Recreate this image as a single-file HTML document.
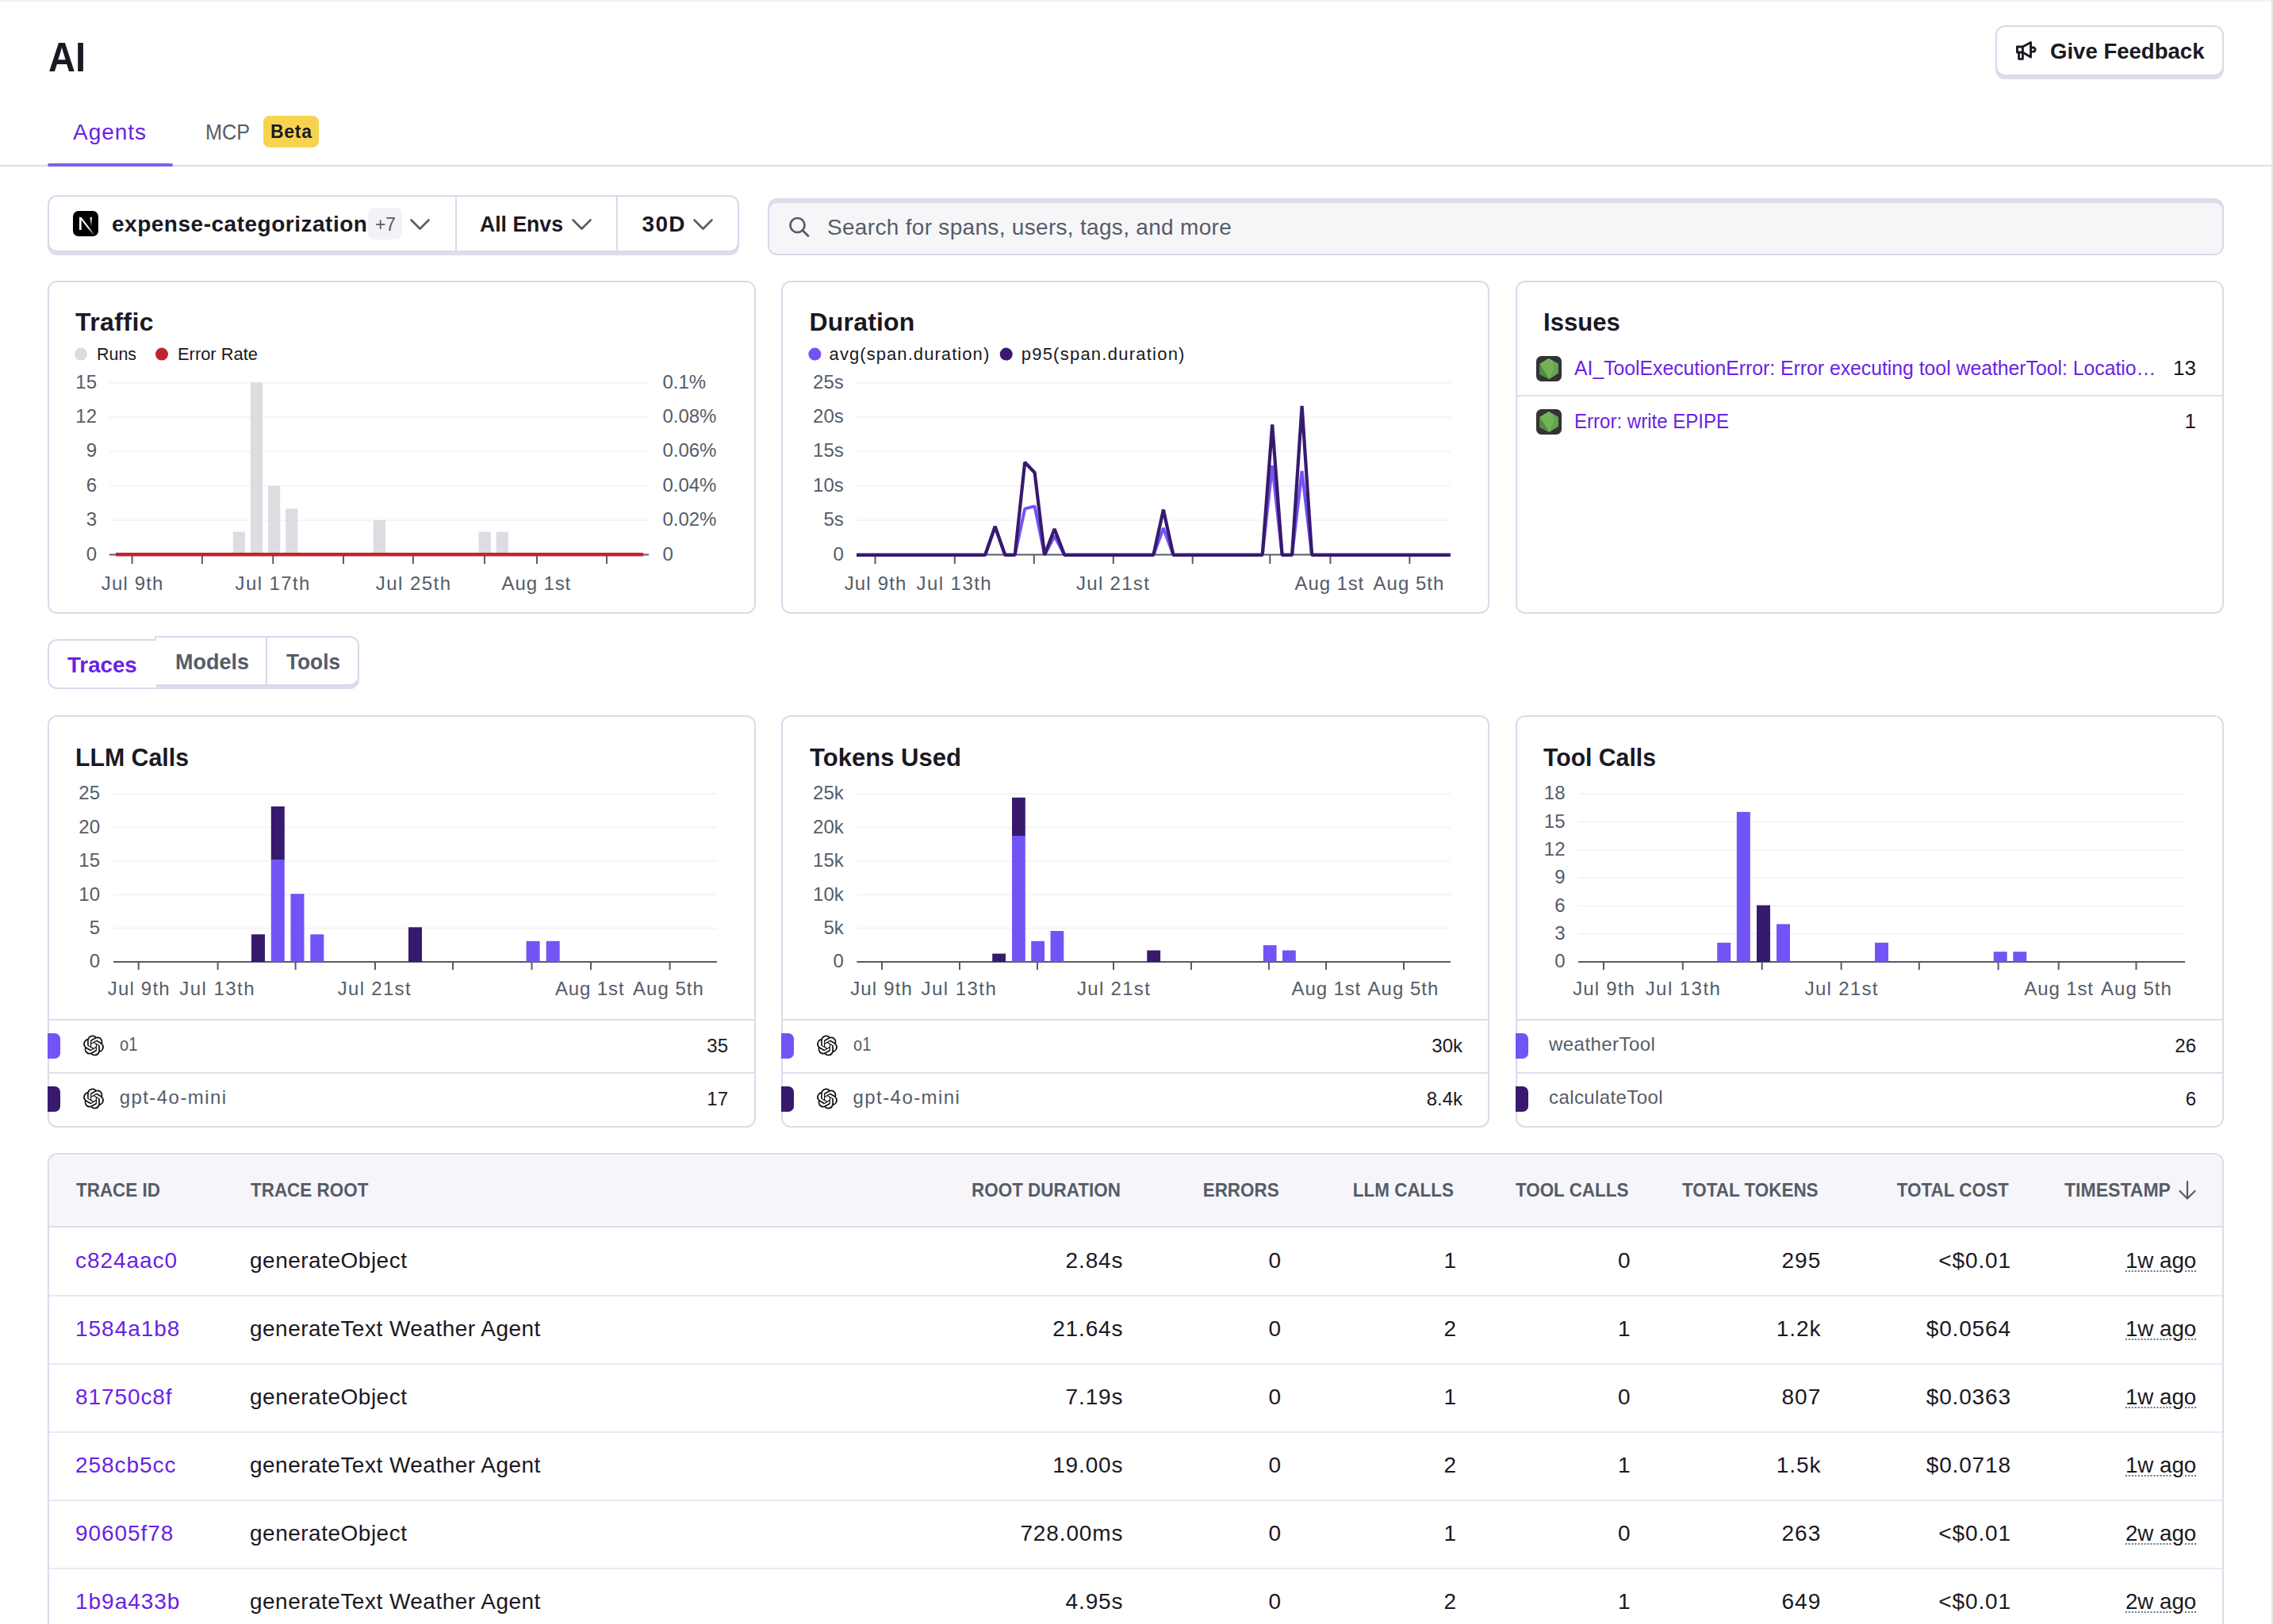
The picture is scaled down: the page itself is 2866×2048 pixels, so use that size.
<!DOCTYPE html><html><head><meta charset="utf-8"><style>
html,body{margin:0;padding:0;}
body{width:2866px;height:2048px;overflow:hidden;position:relative;background:#fff;font-family:"Liberation Sans",sans-serif;}
.a{position:absolute;box-sizing:border-box;}
.t{position:absolute;white-space:nowrap;}
svg{position:absolute;left:0;top:0;}
</style></head><body>

<div class="a" style="left:0px;top:0px;width:2866px;height:2px;background:#f1f1f1;"></div>
<div class="a" style="left:2864px;top:0px;width:2px;height:2048px;background:#e6e6e6;"></div>
<div class="t" style="top:46.0px;font-size:52px;line-height:52px;color:#1b1823;font-weight:700;left:60.5px;transform:scaleX(0.904);transform-origin:0 0;">AI</div>
<div class="a" style="left:2516px;top:32px;width:288px;height:64px;border:2px solid #dcd8ea;border-radius:12px;background:#fff;box-shadow:0 4px 0 #dedbec;"></div>
<svg width="2866" height="2048" style="pointer-events:none">
<g fill="none" stroke="#1b1823" stroke-width="2.8" stroke-linejoin="round" stroke-linecap="round">
<path d="M2543.4 59 h7 v7 h-7 z"/>
<path d="M2550.4 59 L2560.6 53.4 V72 L2550.4 66"/>
<path d="M2545.6 66 v8.4 h4.8 v-8.4"/>
<path d="M2560.6 60 h3 a2.6 2.6 0 0 1 2.6 2.6 a2.6 2.6 0 0 1 -2.6 2.6 h-3"/>
</g></svg>
<div class="t" style="top:51.1px;font-size:28px;line-height:28px;color:#1b1823;font-weight:700;left:2585.0px;transform:scaleX(0.984);transform-origin:0 0;">Give Feedback</div>
<div class="t" style="top:153.1px;font-size:28px;line-height:28px;color:#6a1fe6;letter-spacing:0.96px;left:92.0px;">Agents</div>
<div class="t" style="top:153.1px;font-size:28px;line-height:28px;color:#555c68;left:259.0px;transform:scaleX(0.900);transform-origin:0 0;">MCP</div>
<div class="a" style="left:332px;top:146px;width:70px;height:40px;background:#f7d34d;border-radius:8px;"></div>
<div class="t" style="top:154.5px;font-size:23px;line-height:23px;color:#1b1823;font-weight:700;letter-spacing:0.71px;left:341.0px;">Beta</div>
<div class="a" style="left:0px;top:208px;width:2864px;height:2px;background:#e0dcea;"></div>
<div class="a" style="left:60px;top:206px;width:158px;height:4px;background:#7a5ff2;border-radius:2px;"></div>
<div class="a" style="left:60px;top:246px;width:872px;height:72px;border:2px solid #dcd8ea;border-radius:12px;background:#fff;box-shadow:0 4px 0 #dedbec;"></div>
<div class="a" style="left:574px;top:247px;width:2px;height:70px;background:#dcd8ea;"></div>
<div class="a" style="left:777px;top:247px;width:2px;height:70px;background:#dcd8ea;"></div>
<svg width="2866" height="2048"><defs>
<linearGradient id="ng1" x1="0" y1="0" x2="1" y2="1"><stop offset="0.55" stop-color="#fff"/><stop offset="1" stop-color="#fff" stop-opacity="0"/></linearGradient>
<linearGradient id="ng2" x1="0" y1="0" x2="0" y2="1"><stop offset="0" stop-color="#fff"/><stop offset="1" stop-color="#fff" stop-opacity="0"/></linearGradient></defs>
<rect x="92" y="266" width="32" height="32" rx="7" fill="#000"/>
<rect x="100" y="274" width="2.6" height="16" fill="#fff"/>
<polygon points="100,274 102.6,274 120,296.5 117.5,296.5" fill="url(#ng1)"/>
<rect x="113.6" y="274" width="2.4" height="11.5" fill="url(#ng2)"/></svg>
<div class="t" style="top:269.1px;font-size:28px;line-height:28px;color:#1b1823;font-weight:700;letter-spacing:0.51px;left:141.0px;">expense-categorization</div>
<div class="a" style="left:464px;top:262px;width:43px;height:40px;background:#f3f3f6;border-radius:8px;"></div>
<div class="t" style="top:270.7px;font-size:24px;line-height:24px;color:#555c68;left:473.0px;transform:scaleX(0.950);transform-origin:0 0;">+7</div>
<svg width="2866" height="2048"><path d="M518.5 277.5 l11 11 l11 -11" fill="none" stroke="#555c68" stroke-width="2.6" stroke-linecap="round" stroke-linejoin="round"/><path d="M722.5 277.5 l11 11 l11 -11" fill="none" stroke="#555c68" stroke-width="2.6" stroke-linecap="round" stroke-linejoin="round"/><path d="M875.5 277.5 l11 11 l11 -11" fill="none" stroke="#555c68" stroke-width="2.6" stroke-linecap="round" stroke-linejoin="round"/></svg>
<div class="t" style="top:269.1px;font-size:28px;line-height:28px;color:#1b1823;font-weight:700;left:605.0px;transform:scaleX(0.950);transform-origin:0 0;">All Envs</div>
<div class="t" style="top:269.1px;font-size:28px;line-height:28px;color:#1b1823;font-weight:700;letter-spacing:1.31px;left:809.5px;">30D</div>
<div class="a" style="left:968px;top:250px;width:1836px;height:72px;border:2px solid #dcd8ea;border-radius:12px;background:#f6f6f9;box-shadow:inset 0 4px 0 #dedbec;"></div>
<svg width="2866" height="2048"><g fill="none" stroke="#555c68" stroke-width="2.7" stroke-linecap="round">
<circle cx="1005.5" cy="284" r="9"/><path d="M1012 290.5 L1019 297.5"/></g></svg>
<div class="t" style="top:273.1px;font-size:28px;line-height:28px;color:#555c68;letter-spacing:0.31px;left:1043.0px;">Search for spans, users, tags, and more</div>
<div class="a" style="left:60px;top:354px;width:893px;height:420px;border:2px solid #dddaeb;border-radius:12px;background:#fff;"></div>
<div class="a" style="left:985px;top:354px;width:893px;height:420px;border:2px solid #dddaeb;border-radius:12px;background:#fff;"></div>
<div class="a" style="left:1911px;top:354px;width:893px;height:420px;border:2px solid #dddaeb;border-radius:12px;background:#fff;"></div>
<div class="t" style="top:390.4px;font-size:32px;line-height:32px;color:#1b1823;font-weight:700;letter-spacing:0.41px;left:95.0px;">Traffic</div>
<div class="t" style="top:436.4px;font-size:22px;line-height:22px;color:#1b1823;left:121.5px;transform:scaleX(0.974);transform-origin:0 0;">Runs</div>
<div class="t" style="top:436.4px;font-size:22px;line-height:22px;color:#1b1823;left:223.5px;transform:scaleX(0.995);transform-origin:0 0;">Error Rate</div>
<div class="t" style="top:469.6px;font-size:24px;line-height:24px;color:#555c68;right:2744.0px;text-align:right;">15</div>
<div class="t" style="top:469.6px;font-size:24px;line-height:24px;color:#555c68;left:835.4px;">0.1%</div>
<div class="t" style="top:513.0px;font-size:24px;line-height:24px;color:#555c68;right:2744.0px;text-align:right;">12</div>
<div class="t" style="top:513.0px;font-size:24px;line-height:24px;color:#555c68;left:835.4px;">0.08%</div>
<div class="t" style="top:556.4px;font-size:24px;line-height:24px;color:#555c68;right:2744.0px;text-align:right;">9</div>
<div class="t" style="top:556.4px;font-size:24px;line-height:24px;color:#555c68;left:835.4px;">0.06%</div>
<div class="t" style="top:599.8px;font-size:24px;line-height:24px;color:#555c68;right:2744.0px;text-align:right;">6</div>
<div class="t" style="top:599.8px;font-size:24px;line-height:24px;color:#555c68;left:835.4px;">0.04%</div>
<div class="t" style="top:643.2px;font-size:24px;line-height:24px;color:#555c68;right:2744.0px;text-align:right;">3</div>
<div class="t" style="top:643.2px;font-size:24px;line-height:24px;color:#555c68;left:835.4px;">0.02%</div>
<div class="t" style="top:686.6px;font-size:24px;line-height:24px;color:#555c68;right:2744.0px;text-align:right;">0</div>
<div class="t" style="top:686.6px;font-size:24px;line-height:24px;color:#555c68;left:835.4px;">0</div>
<div class="t" style="top:723.7px;font-size:24px;line-height:24px;color:#555c68;letter-spacing:1.17px;left:67.2px;width:200px;text-align:center;">Jul 9th</div>
<div class="t" style="top:723.7px;font-size:24px;line-height:24px;color:#555c68;letter-spacing:1.41px;left:244.2px;width:200px;text-align:center;">Jul 17th</div>
<div class="t" style="top:723.7px;font-size:24px;line-height:24px;color:#555c68;letter-spacing:1.46px;left:421.7px;width:200px;text-align:center;">Jul 25th</div>
<div class="t" style="top:723.7px;font-size:24px;line-height:24px;color:#555c68;letter-spacing:0.88px;left:576.4px;width:200px;text-align:center;">Aug 1st</div>
<div class="t" style="top:390.4px;font-size:32px;line-height:32px;color:#1b1823;font-weight:700;letter-spacing:0.18px;left:1020.5px;">Duration</div>
<div class="t" style="top:436.4px;font-size:22px;line-height:22px;color:#1b1823;letter-spacing:1.07px;left:1045.6px;">avg(span.duration)</div>
<div class="t" style="top:436.4px;font-size:22px;line-height:22px;color:#1b1823;letter-spacing:1.24px;left:1287.7px;">p95(span.duration)</div>
<div class="t" style="top:469.6px;font-size:24px;line-height:24px;color:#555c68;right:1802.2px;text-align:right;">25s</div>
<div class="t" style="top:513.0px;font-size:24px;line-height:24px;color:#555c68;right:1802.2px;text-align:right;">20s</div>
<div class="t" style="top:556.4px;font-size:24px;line-height:24px;color:#555c68;right:1802.2px;text-align:right;">15s</div>
<div class="t" style="top:599.8px;font-size:24px;line-height:24px;color:#555c68;right:1802.2px;text-align:right;">10s</div>
<div class="t" style="top:643.2px;font-size:24px;line-height:24px;color:#555c68;right:1802.2px;text-align:right;">5s</div>
<div class="t" style="top:686.6px;font-size:24px;line-height:24px;color:#555c68;right:1802.2px;text-align:right;">0</div>
<div class="t" style="top:723.7px;font-size:24px;line-height:24px;color:#555c68;letter-spacing:1.17px;left:1004.1px;width:200px;text-align:center;">Jul 9th</div>
<div class="t" style="top:723.7px;font-size:24px;line-height:24px;color:#555c68;letter-spacing:1.46px;left:1103.3px;width:200px;text-align:center;">Jul 13th</div>
<div class="t" style="top:723.7px;font-size:24px;line-height:24px;color:#555c68;letter-spacing:1.30px;left:1303.6px;width:200px;text-align:center;">Jul 21st</div>
<div class="t" style="top:723.7px;font-size:24px;line-height:24px;color:#555c68;letter-spacing:0.88px;left:1576.4px;width:200px;text-align:center;">Aug 1st</div>
<div class="t" style="top:723.7px;font-size:24px;line-height:24px;color:#555c68;letter-spacing:1.01px;left:1676.5px;width:200px;text-align:center;">Aug 5th</div>
<div class="t" style="top:390.4px;font-size:32px;line-height:32px;color:#1b1823;font-weight:700;left:1946.0px;transform:scaleX(0.973);transform-origin:0 0;">Issues</div>
<div class="t" style="top:451.0px;font-size:26px;line-height:26px;color:#6a1fe6;left:1985.0px;transform:scaleX(0.952);transform-origin:0 0;">AI_ToolExecutionError: Error executing tool weatherTool: Locatio…</div>
<div class="t" style="top:451.0px;font-size:26px;line-height:26px;color:#1b1823;right:97.0px;text-align:right;">13</div>
<div class="a" style="left:1913px;top:498px;width:889px;height:2px;background:#e0dcea;"></div>
<div class="t" style="top:518.0px;font-size:26px;line-height:26px;color:#6a1fe6;left:1985.0px;transform:scaleX(0.925);transform-origin:0 0;">Error: write EPIPE</div>
<div class="t" style="top:518.0px;font-size:26px;line-height:26px;color:#1b1823;right:97.0px;text-align:right;">1</div>
<div class="a" style="left:195px;top:802px;width:258px;height:63px;border:2px solid #dcd8ea;border-radius:0 12px 12px 0;background:#fff;box-shadow:0 4px 0 #dedbec;"></div>
<div class="a" style="left:335px;top:804px;width:2px;height:59px;background:#dcd8ea;"></div>
<div class="a" style="left:60px;top:806px;width:137px;height:63px;border:2px solid #dcd8ea;border-right:none;border-radius:12px 0 0 12px;background:#fff;"></div>
<div class="t" style="top:825.1px;font-size:28px;line-height:28px;color:#6a1fe6;font-weight:700;left:85.0px;transform:scaleX(0.988);transform-origin:0 0;">Traces</div>
<div class="t" style="top:821.4px;font-size:28px;line-height:28px;color:#555c68;font-weight:700;left:220.6px;transform:scaleX(0.964);transform-origin:0 0;">Models</div>
<div class="t" style="top:821.4px;font-size:28px;line-height:28px;color:#555c68;font-weight:700;left:360.8px;transform:scaleX(0.937);transform-origin:0 0;">Tools</div>
<div class="a" style="left:60px;top:902px;width:893px;height:520px;border:2px solid #dddaeb;border-radius:12px;background:#fff;"></div>
<div class="a" style="left:985px;top:902px;width:893px;height:520px;border:2px solid #dddaeb;border-radius:12px;background:#fff;"></div>
<div class="a" style="left:1911px;top:902px;width:893px;height:520px;border:2px solid #dddaeb;border-radius:12px;background:#fff;"></div>
<div class="t" style="top:938.6px;font-size:32px;line-height:32px;color:#1b1823;font-weight:700;left:94.5px;transform:scaleX(0.946);transform-origin:0 0;">LLM Calls</div>
<div class="t" style="top:988.3px;font-size:24px;line-height:24px;color:#555c68;right:2740.0px;text-align:right;">25</div>
<div class="t" style="top:1030.7px;font-size:24px;line-height:24px;color:#555c68;right:2740.0px;text-align:right;">20</div>
<div class="t" style="top:1073.1px;font-size:24px;line-height:24px;color:#555c68;right:2740.0px;text-align:right;">15</div>
<div class="t" style="top:1115.5px;font-size:24px;line-height:24px;color:#555c68;right:2740.0px;text-align:right;">10</div>
<div class="t" style="top:1157.9px;font-size:24px;line-height:24px;color:#555c68;right:2740.0px;text-align:right;">5</div>
<div class="t" style="top:1200.3px;font-size:24px;line-height:24px;color:#555c68;right:2740.0px;text-align:right;">0</div>
<div class="t" style="top:1235.2px;font-size:24px;line-height:24px;color:#555c68;letter-spacing:1.17px;left:75.3px;width:200px;text-align:center;">Jul 9th</div>
<div class="t" style="top:1235.2px;font-size:24px;line-height:24px;color:#555c68;letter-spacing:1.46px;left:174.1px;width:200px;text-align:center;">Jul 13th</div>
<div class="t" style="top:1235.2px;font-size:24px;line-height:24px;color:#555c68;letter-spacing:1.30px;left:372.3px;width:200px;text-align:center;">Jul 21st</div>
<div class="t" style="top:1235.2px;font-size:24px;line-height:24px;color:#555c68;letter-spacing:0.88px;left:643.7px;width:200px;text-align:center;">Aug 1st</div>
<div class="t" style="top:1235.2px;font-size:24px;line-height:24px;color:#555c68;letter-spacing:1.01px;left:743.0px;width:200px;text-align:center;">Aug 5th</div>
<div class="a" style="left:60px;top:1285px;width:891px;height:2px;background:#e0dcea;"></div>
<div class="a" style="left:60px;top:1352px;width:891px;height:2px;background:#e0dcea;"></div>
<div class="a" style="left:60px;top:1303px;width:16px;height:31.5px;background:#7254f6;border-radius:0 7px 7px 0;"></div>
<div class="t" style="top:1304.7px;font-size:24px;line-height:24px;color:#555c68;left:150.7px;transform:scaleX(0.839);transform-origin:0 0;">o1</div>
<div class="t" style="top:1306.5px;font-size:24px;line-height:24px;color:#1b1823;right:1948.0px;text-align:right;">35</div>
<div class="a" style="left:60px;top:1370px;width:16px;height:31.5px;background:#371a6d;border-radius:0 7px 7px 0;"></div>
<div class="t" style="top:1371.7px;font-size:24px;line-height:24px;color:#555c68;letter-spacing:1.44px;left:150.7px;">gpt-4o-mini</div>
<div class="t" style="top:1373.5px;font-size:24px;line-height:24px;color:#1b1823;right:1948.0px;text-align:right;">17</div>
<div class="t" style="top:938.6px;font-size:32px;line-height:32px;color:#1b1823;font-weight:700;left:1020.5px;transform:scaleX(0.971);transform-origin:0 0;">Tokens Used</div>
<div class="t" style="top:988.3px;font-size:24px;line-height:24px;color:#555c68;right:1802.2px;text-align:right;">25k</div>
<div class="t" style="top:1030.7px;font-size:24px;line-height:24px;color:#555c68;right:1802.2px;text-align:right;">20k</div>
<div class="t" style="top:1073.1px;font-size:24px;line-height:24px;color:#555c68;right:1802.2px;text-align:right;">15k</div>
<div class="t" style="top:1115.5px;font-size:24px;line-height:24px;color:#555c68;right:1802.2px;text-align:right;">10k</div>
<div class="t" style="top:1157.9px;font-size:24px;line-height:24px;color:#555c68;right:1802.2px;text-align:right;">5k</div>
<div class="t" style="top:1200.3px;font-size:24px;line-height:24px;color:#555c68;right:1802.2px;text-align:right;">0</div>
<div class="t" style="top:1235.2px;font-size:24px;line-height:24px;color:#555c68;letter-spacing:1.17px;left:1011.6px;width:200px;text-align:center;">Jul 9th</div>
<div class="t" style="top:1235.2px;font-size:24px;line-height:24px;color:#555c68;letter-spacing:1.46px;left:1109.4px;width:200px;text-align:center;">Jul 13th</div>
<div class="t" style="top:1235.2px;font-size:24px;line-height:24px;color:#555c68;letter-spacing:1.30px;left:1304.6px;width:200px;text-align:center;">Jul 21st</div>
<div class="t" style="top:1235.2px;font-size:24px;line-height:24px;color:#555c68;letter-spacing:0.88px;left:1572.3px;width:200px;text-align:center;">Aug 1st</div>
<div class="t" style="top:1235.2px;font-size:24px;line-height:24px;color:#555c68;letter-spacing:1.01px;left:1669.5px;width:200px;text-align:center;">Aug 5th</div>
<div class="a" style="left:985px;top:1285px;width:891px;height:2px;background:#e0dcea;"></div>
<div class="a" style="left:985px;top:1352px;width:891px;height:2px;background:#e0dcea;"></div>
<div class="a" style="left:985px;top:1303px;width:16px;height:31.5px;background:#7254f6;border-radius:0 7px 7px 0;"></div>
<div class="t" style="top:1304.7px;font-size:24px;line-height:24px;color:#555c68;left:1075.5px;transform:scaleX(0.839);transform-origin:0 0;">o1</div>
<div class="t" style="top:1306.5px;font-size:24px;line-height:24px;color:#1b1823;right:1022.0px;text-align:right;">30k</div>
<div class="a" style="left:985px;top:1370px;width:16px;height:31.5px;background:#371a6d;border-radius:0 7px 7px 0;"></div>
<div class="t" style="top:1371.7px;font-size:24px;line-height:24px;color:#555c68;letter-spacing:1.44px;left:1075.5px;">gpt-4o-mini</div>
<div class="t" style="top:1373.5px;font-size:24px;line-height:24px;color:#1b1823;right:1022.0px;text-align:right;">8.4k</div>
<div class="t" style="top:938.6px;font-size:32px;line-height:32px;color:#1b1823;font-weight:700;left:1946.0px;transform:scaleX(0.943);transform-origin:0 0;">Tool Calls</div>
<div class="t" style="top:988.3px;font-size:24px;line-height:24px;color:#555c68;right:892.5px;text-align:right;">18</div>
<div class="t" style="top:1023.6px;font-size:24px;line-height:24px;color:#555c68;right:892.5px;text-align:right;">15</div>
<div class="t" style="top:1059.0px;font-size:24px;line-height:24px;color:#555c68;right:892.5px;text-align:right;">12</div>
<div class="t" style="top:1094.3px;font-size:24px;line-height:24px;color:#555c68;right:892.5px;text-align:right;">9</div>
<div class="t" style="top:1129.6px;font-size:24px;line-height:24px;color:#555c68;right:892.5px;text-align:right;">6</div>
<div class="t" style="top:1165.0px;font-size:24px;line-height:24px;color:#555c68;right:892.5px;text-align:right;">3</div>
<div class="t" style="top:1200.3px;font-size:24px;line-height:24px;color:#555c68;right:892.5px;text-align:right;">0</div>
<div class="t" style="top:1235.2px;font-size:24px;line-height:24px;color:#555c68;letter-spacing:1.17px;left:1922.6px;width:200px;text-align:center;">Jul 9th</div>
<div class="t" style="top:1235.2px;font-size:24px;line-height:24px;color:#555c68;letter-spacing:1.46px;left:2022.5px;width:200px;text-align:center;">Jul 13th</div>
<div class="t" style="top:1235.2px;font-size:24px;line-height:24px;color:#555c68;letter-spacing:1.30px;left:2222.2px;width:200px;text-align:center;">Jul 21st</div>
<div class="t" style="top:1235.2px;font-size:24px;line-height:24px;color:#555c68;letter-spacing:0.88px;left:2496.1px;width:200px;text-align:center;">Aug 1st</div>
<div class="t" style="top:1235.2px;font-size:24px;line-height:24px;color:#555c68;letter-spacing:1.01px;left:2594.0px;width:200px;text-align:center;">Aug 5th</div>
<div class="a" style="left:1911px;top:1285px;width:891px;height:2px;background:#e0dcea;"></div>
<div class="a" style="left:1911px;top:1352px;width:891px;height:2px;background:#e0dcea;"></div>
<div class="a" style="left:1911px;top:1303px;width:16px;height:31.5px;background:#7254f6;border-radius:0 7px 7px 0;"></div>
<div class="t" style="top:1304.7px;font-size:24px;line-height:24px;color:#555c68;letter-spacing:0.45px;left:1953.0px;">weatherTool</div>
<div class="t" style="top:1306.5px;font-size:24px;line-height:24px;color:#1b1823;right:97.0px;text-align:right;">26</div>
<div class="a" style="left:1911px;top:1370px;width:16px;height:31.5px;background:#371a6d;border-radius:0 7px 7px 0;"></div>
<div class="t" style="top:1371.7px;font-size:24px;line-height:24px;color:#555c68;letter-spacing:0.40px;left:1953.0px;">calculateTool</div>
<div class="t" style="top:1373.5px;font-size:24px;line-height:24px;color:#1b1823;right:97.0px;text-align:right;">6</div>
<div class="a" style="left:60px;top:1454px;width:2744px;height:594px;border:2px solid #dddaeb;border-bottom:none;border-radius:12px 12px 0 0;background:#fff;"></div>
<div class="a" style="left:62px;top:1456px;width:2740px;height:90px;background:#f6f6fa;border-radius:10px 10px 0 0;"></div>
<div class="a" style="left:62px;top:1546px;width:2740px;height:2px;background:#e0dcea;"></div>
<div class="t" style="top:1489.2px;font-size:24px;line-height:24px;color:#555c68;font-weight:700;left:96.4px;transform:scaleX(0.935);transform-origin:0 0;">TRACE ID</div>
<div class="t" style="top:1489.2px;font-size:24px;line-height:24px;color:#555c68;font-weight:700;left:316.0px;transform:scaleX(0.935);transform-origin:0 0;">TRACE ROOT</div>
<div class="t" style="top:1489.2px;font-size:24px;line-height:24px;color:#555c68;font-weight:700;right:1453.0px;text-align:right;transform:scaleX(0.935);transform-origin:100% 0;">ROOT DURATION</div>
<div class="t" style="top:1489.2px;font-size:24px;line-height:24px;color:#555c68;font-weight:700;right:1253.0px;text-align:right;transform:scaleX(0.935);transform-origin:100% 0;">ERRORS</div>
<div class="t" style="top:1489.2px;font-size:24px;line-height:24px;color:#555c68;font-weight:700;right:1033.0px;text-align:right;transform:scaleX(0.935);transform-origin:100% 0;">LLM CALLS</div>
<div class="t" style="top:1489.2px;font-size:24px;line-height:24px;color:#555c68;font-weight:700;right:813.0px;text-align:right;transform:scaleX(0.935);transform-origin:100% 0;">TOOL CALLS</div>
<div class="t" style="top:1489.2px;font-size:24px;line-height:24px;color:#555c68;font-weight:700;right:573.0px;text-align:right;transform:scaleX(0.935);transform-origin:100% 0;">TOTAL TOKENS</div>
<div class="t" style="top:1489.2px;font-size:24px;line-height:24px;color:#555c68;font-weight:700;right:333.0px;text-align:right;transform:scaleX(0.935);transform-origin:100% 0;">TOTAL COST</div>
<div class="t" style="top:1489.2px;font-size:24px;line-height:24px;color:#555c68;font-weight:700;left:2602.5px;transform:scaleX(0.960);transform-origin:0 0;">TIMESTAMP</div>
<div class="t" style="top:1576.1px;font-size:28px;line-height:28px;color:#6a1fe6;letter-spacing:0.95px;left:95.0px;">c824aac0</div>
<div class="t" style="top:1576.1px;font-size:28px;line-height:28px;color:#1b1823;letter-spacing:0.50px;left:315.0px;">generateObject</div>
<div class="t" style="top:1576.1px;font-size:28px;line-height:28px;color:#1b1823;letter-spacing:0.86px;right:1449.6px;text-align:right;">2.84s</div>
<div class="t" style="top:1576.1px;font-size:28px;line-height:28px;color:#1b1823;letter-spacing:0.78px;right:1250.2px;text-align:right;">0</div>
<div class="t" style="top:1576.1px;font-size:28px;line-height:28px;color:#1b1823;letter-spacing:0.78px;right:1029.2px;text-align:right;">1</div>
<div class="t" style="top:1576.1px;font-size:28px;line-height:28px;color:#1b1823;letter-spacing:0.78px;right:809.7px;text-align:right;">0</div>
<div class="t" style="top:1576.1px;font-size:28px;line-height:28px;color:#1b1823;letter-spacing:1.17px;right:569.4px;text-align:right;">295</div>
<div class="t" style="top:1576.1px;font-size:28px;line-height:28px;color:#1b1823;letter-spacing:0.86px;right:330.1px;text-align:right;">&lt;$0.01</div>
<div class="t" style="top:1576.1px;font-size:28px;line-height:28px;color:#1b1823;right:96.5px;text-align:right;transform:scaleX(0.990);transform-origin:100% 0;text-decoration:underline dotted #6f7480;text-decoration-thickness:2px;text-underline-offset:3px;">1w ago</div>
<div class="a" style="left:62px;top:1633px;width:2740px;height:2px;background:#ebe8f2;"></div>
<div class="t" style="top:1662.1px;font-size:28px;line-height:28px;color:#6a1fe6;letter-spacing:0.98px;left:95.0px;">1584a1b8</div>
<div class="t" style="top:1662.1px;font-size:28px;line-height:28px;color:#1b1823;letter-spacing:0.48px;left:315.0px;">generateText Weather Agent</div>
<div class="t" style="top:1662.1px;font-size:28px;line-height:28px;color:#1b1823;letter-spacing:0.84px;right:1449.7px;text-align:right;">21.64s</div>
<div class="t" style="top:1662.1px;font-size:28px;line-height:28px;color:#1b1823;letter-spacing:0.78px;right:1250.2px;text-align:right;">0</div>
<div class="t" style="top:1662.1px;font-size:28px;line-height:28px;color:#1b1823;letter-spacing:0.78px;right:1029.2px;text-align:right;">2</div>
<div class="t" style="top:1662.1px;font-size:28px;line-height:28px;color:#1b1823;letter-spacing:0.78px;right:809.7px;text-align:right;">1</div>
<div class="t" style="top:1662.1px;font-size:28px;line-height:28px;color:#1b1823;letter-spacing:0.88px;right:569.7px;text-align:right;">1.2k</div>
<div class="t" style="top:1662.1px;font-size:28px;line-height:28px;color:#1b1823;letter-spacing:0.84px;right:330.2px;text-align:right;">$0.0564</div>
<div class="t" style="top:1662.1px;font-size:28px;line-height:28px;color:#1b1823;right:96.5px;text-align:right;transform:scaleX(0.990);transform-origin:100% 0;text-decoration:underline dotted #6f7480;text-decoration-thickness:2px;text-underline-offset:3px;">1w ago</div>
<div class="a" style="left:62px;top:1719px;width:2740px;height:2px;background:#ebe8f2;"></div>
<div class="t" style="top:1748.1px;font-size:28px;line-height:28px;color:#6a1fe6;letter-spacing:0.91px;left:95.0px;">81750c8f</div>
<div class="t" style="top:1748.1px;font-size:28px;line-height:28px;color:#1b1823;letter-spacing:0.50px;left:315.0px;">generateObject</div>
<div class="t" style="top:1748.1px;font-size:28px;line-height:28px;color:#1b1823;letter-spacing:0.86px;right:1449.6px;text-align:right;">7.19s</div>
<div class="t" style="top:1748.1px;font-size:28px;line-height:28px;color:#1b1823;letter-spacing:0.78px;right:1250.2px;text-align:right;">0</div>
<div class="t" style="top:1748.1px;font-size:28px;line-height:28px;color:#1b1823;letter-spacing:0.78px;right:1029.2px;text-align:right;">1</div>
<div class="t" style="top:1748.1px;font-size:28px;line-height:28px;color:#1b1823;letter-spacing:0.78px;right:809.7px;text-align:right;">0</div>
<div class="t" style="top:1748.1px;font-size:28px;line-height:28px;color:#1b1823;letter-spacing:1.17px;right:569.4px;text-align:right;">807</div>
<div class="t" style="top:1748.1px;font-size:28px;line-height:28px;color:#1b1823;letter-spacing:0.84px;right:330.2px;text-align:right;">$0.0363</div>
<div class="t" style="top:1748.1px;font-size:28px;line-height:28px;color:#1b1823;right:96.5px;text-align:right;transform:scaleX(0.990);transform-origin:100% 0;text-decoration:underline dotted #6f7480;text-decoration-thickness:2px;text-underline-offset:3px;">1w ago</div>
<div class="a" style="left:62px;top:1805px;width:2740px;height:2px;background:#ebe8f2;"></div>
<div class="t" style="top:1834.1px;font-size:28px;line-height:28px;color:#6a1fe6;letter-spacing:0.94px;left:95.0px;">258cb5cc</div>
<div class="t" style="top:1834.1px;font-size:28px;line-height:28px;color:#1b1823;letter-spacing:0.48px;left:315.0px;">generateText Weather Agent</div>
<div class="t" style="top:1834.1px;font-size:28px;line-height:28px;color:#1b1823;letter-spacing:0.84px;right:1449.7px;text-align:right;">19.00s</div>
<div class="t" style="top:1834.1px;font-size:28px;line-height:28px;color:#1b1823;letter-spacing:0.78px;right:1250.2px;text-align:right;">0</div>
<div class="t" style="top:1834.1px;font-size:28px;line-height:28px;color:#1b1823;letter-spacing:0.78px;right:1029.2px;text-align:right;">2</div>
<div class="t" style="top:1834.1px;font-size:28px;line-height:28px;color:#1b1823;letter-spacing:0.78px;right:809.7px;text-align:right;">1</div>
<div class="t" style="top:1834.1px;font-size:28px;line-height:28px;color:#1b1823;letter-spacing:0.88px;right:569.7px;text-align:right;">1.5k</div>
<div class="t" style="top:1834.1px;font-size:28px;line-height:28px;color:#1b1823;letter-spacing:0.84px;right:330.2px;text-align:right;">$0.0718</div>
<div class="t" style="top:1834.1px;font-size:28px;line-height:28px;color:#1b1823;right:96.5px;text-align:right;transform:scaleX(0.990);transform-origin:100% 0;text-decoration:underline dotted #6f7480;text-decoration-thickness:2px;text-underline-offset:3px;">1w ago</div>
<div class="a" style="left:62px;top:1891px;width:2740px;height:2px;background:#ebe8f2;"></div>
<div class="t" style="top:1920.1px;font-size:28px;line-height:28px;color:#6a1fe6;letter-spacing:0.92px;left:95.0px;">90605f78</div>
<div class="t" style="top:1920.1px;font-size:28px;line-height:28px;color:#1b1823;letter-spacing:0.50px;left:315.0px;">generateObject</div>
<div class="t" style="top:1920.1px;font-size:28px;line-height:28px;color:#1b1823;letter-spacing:0.88px;right:1449.6px;text-align:right;">728.00ms</div>
<div class="t" style="top:1920.1px;font-size:28px;line-height:28px;color:#1b1823;letter-spacing:0.78px;right:1250.2px;text-align:right;">0</div>
<div class="t" style="top:1920.1px;font-size:28px;line-height:28px;color:#1b1823;letter-spacing:0.78px;right:1029.2px;text-align:right;">1</div>
<div class="t" style="top:1920.1px;font-size:28px;line-height:28px;color:#1b1823;letter-spacing:0.78px;right:809.7px;text-align:right;">0</div>
<div class="t" style="top:1920.1px;font-size:28px;line-height:28px;color:#1b1823;letter-spacing:1.17px;right:569.4px;text-align:right;">263</div>
<div class="t" style="top:1920.1px;font-size:28px;line-height:28px;color:#1b1823;letter-spacing:0.86px;right:330.1px;text-align:right;">&lt;$0.01</div>
<div class="t" style="top:1920.1px;font-size:28px;line-height:28px;color:#1b1823;right:96.5px;text-align:right;transform:scaleX(0.990);transform-origin:100% 0;text-decoration:underline dotted #6f7480;text-decoration-thickness:2px;text-underline-offset:3px;">2w ago</div>
<div class="a" style="left:62px;top:1977px;width:2740px;height:2px;background:#ebe8f2;"></div>
<div class="t" style="top:2006.1px;font-size:28px;line-height:28px;color:#6a1fe6;letter-spacing:0.98px;left:95.0px;">1b9a433b</div>
<div class="t" style="top:2006.1px;font-size:28px;line-height:28px;color:#1b1823;letter-spacing:0.48px;left:315.0px;">generateText Weather Agent</div>
<div class="t" style="top:2006.1px;font-size:28px;line-height:28px;color:#1b1823;letter-spacing:0.86px;right:1449.6px;text-align:right;">4.95s</div>
<div class="t" style="top:2006.1px;font-size:28px;line-height:28px;color:#1b1823;letter-spacing:0.78px;right:1250.2px;text-align:right;">0</div>
<div class="t" style="top:2006.1px;font-size:28px;line-height:28px;color:#1b1823;letter-spacing:0.78px;right:1029.2px;text-align:right;">2</div>
<div class="t" style="top:2006.1px;font-size:28px;line-height:28px;color:#1b1823;letter-spacing:0.78px;right:809.7px;text-align:right;">1</div>
<div class="t" style="top:2006.1px;font-size:28px;line-height:28px;color:#1b1823;letter-spacing:1.17px;right:569.4px;text-align:right;">649</div>
<div class="t" style="top:2006.1px;font-size:28px;line-height:28px;color:#1b1823;letter-spacing:0.86px;right:330.1px;text-align:right;">&lt;$0.01</div>
<div class="t" style="top:2006.1px;font-size:28px;line-height:28px;color:#1b1823;right:96.5px;text-align:right;transform:scaleX(0.990);transform-origin:100% 0;text-decoration:underline dotted #6f7480;text-decoration-thickness:2px;text-underline-offset:3px;">2w ago</div>
<svg width="2866" height="2048" style="pointer-events:none"><circle cx="102" cy="446.6" r="8" fill="#dbdbe0"/><circle cx="204" cy="446.6" r="8" fill="#bf2530"/><rect x="138" y="481.5" width="680" height="2" fill="#f4f4f7"/><rect x="138" y="524.9" width="680" height="2" fill="#f4f4f7"/><rect x="138" y="568.3" width="680" height="2" fill="#f4f4f7"/><rect x="138" y="611.7" width="680" height="2" fill="#f4f4f7"/><rect x="138" y="655.1" width="680" height="2" fill="#f4f4f7"/><rect x="138" y="698.5" width="680" height="2" fill="#555c68"/><rect x="165.6" y="699" width="2" height="12" fill="#555c68"/><rect x="253.9" y="699" width="2" height="12" fill="#555c68"/><rect x="343.3" y="699" width="2" height="12" fill="#555c68"/><rect x="432.0" y="699" width="2" height="12" fill="#555c68"/><rect x="519.9" y="699" width="2" height="12" fill="#555c68"/><rect x="610.0" y="699" width="2" height="12" fill="#555c68"/><rect x="676.0" y="699" width="2" height="12" fill="#555c68"/><rect x="764.0" y="699" width="2" height="12" fill="#555c68"/><rect x="293.8" y="670.6" width="15.2" height="28.9" fill="#dcdce1"/><rect x="315.9" y="482.5" width="15.2" height="217.0" fill="#dcdce1"/><rect x="338.0" y="612.7" width="15.2" height="86.8" fill="#dcdce1"/><rect x="360.2" y="641.6" width="15.2" height="57.9" fill="#dcdce1"/><rect x="470.8" y="656.1" width="15.2" height="43.4" fill="#dcdce1"/><rect x="603.6" y="670.6" width="15.2" height="28.9" fill="#dcdce1"/><rect x="625.7" y="670.6" width="15.2" height="28.9" fill="#dcdce1"/><rect x="146" y="697" width="665" height="4.5" fill="#bf2530"/><circle cx="1027.4" cy="446.6" r="8" fill="#7254f6"/><circle cx="1268.7" cy="446.6" r="8" fill="#371a6d"/><rect x="1080" y="481.5" width="749" height="2" fill="#f4f4f7"/><rect x="1080" y="524.9" width="749" height="2" fill="#f4f4f7"/><rect x="1080" y="568.3" width="749" height="2" fill="#f4f4f7"/><rect x="1080" y="611.7" width="749" height="2" fill="#f4f4f7"/><rect x="1080" y="655.1" width="749" height="2" fill="#f4f4f7"/><rect x="1080" y="698.5" width="749" height="2" fill="#555c68"/><rect x="1102.5" y="699" width="2" height="12" fill="#555c68"/><rect x="1202.8" y="699" width="2" height="12" fill="#555c68"/><rect x="1302.8" y="699" width="2" height="12" fill="#555c68"/><rect x="1402.8" y="699" width="2" height="12" fill="#555c68"/><rect x="1502.7" y="699" width="2" height="12" fill="#555c68"/><rect x="1600.3" y="699" width="2" height="12" fill="#555c68"/><rect x="1676.4" y="699" width="2" height="12" fill="#555c68"/><rect x="1776.4" y="699" width="2" height="12" fill="#555c68"/><polyline points="1080.0,699.8 1092.5,699.8 1105.0,699.8 1117.4,699.8 1129.9,699.8 1142.4,699.8 1154.9,699.8 1167.4,699.8 1179.8,699.8 1192.3,699.8 1204.8,699.8 1217.3,699.8 1229.8,699.8 1242.2,699.8 1254.7,664.0 1267.2,699.8 1279.7,699.8 1292.2,641.6 1304.6,638.4 1317.1,699.8 1329.6,676.0 1342.1,699.8 1354.6,699.8 1367.0,699.8 1379.5,699.8 1392.0,699.8 1404.5,699.8 1417.0,699.8 1429.4,699.8 1441.9,699.8 1454.4,699.8 1466.9,666.0 1479.4,699.8 1491.8,699.8 1504.3,699.8 1516.8,699.8 1529.3,699.8 1541.8,699.8 1554.2,699.8 1566.7,699.8 1579.2,699.8 1591.7,699.8 1604.2,587.0 1616.6,699.8 1629.1,699.8 1641.6,594.0 1654.1,699.8 1666.6,699.8 1679.0,699.8 1691.5,699.8 1704.0,699.8 1716.5,699.8 1729.0,699.8 1741.4,699.8 1753.9,699.8 1766.4,699.8 1778.9,699.8 1791.4,699.8 1803.8,699.8 1816.3,699.8 1828.8,699.8" fill="none" stroke="#7254f6" stroke-width="4" stroke-linejoin="bevel"/><polyline points="1080.0,699.8 1092.5,699.8 1105.0,699.8 1117.4,699.8 1129.9,699.8 1142.4,699.8 1154.9,699.8 1167.4,699.8 1179.8,699.8 1192.3,699.8 1204.8,699.8 1217.3,699.8 1229.8,699.8 1242.2,699.8 1254.7,664.0 1267.2,699.8 1279.7,699.8 1292.2,583.0 1304.6,596.0 1317.1,699.8 1329.6,667.0 1342.1,699.8 1354.6,699.8 1367.0,699.8 1379.5,699.8 1392.0,699.8 1404.5,699.8 1417.0,699.8 1429.4,699.8 1441.9,699.8 1454.4,699.8 1466.9,642.8 1479.4,699.8 1491.8,699.8 1504.3,699.8 1516.8,699.8 1529.3,699.8 1541.8,699.8 1554.2,699.8 1566.7,699.8 1579.2,699.8 1591.7,699.8 1604.2,535.5 1616.6,699.8 1629.1,699.8 1641.6,512.0 1654.1,699.8 1666.6,699.8 1679.0,699.8 1691.5,699.8 1704.0,699.8 1716.5,699.8 1729.0,699.8 1741.4,699.8 1753.9,699.8 1766.4,699.8 1778.9,699.8 1791.4,699.8 1803.8,699.8 1816.3,699.8 1828.8,699.8" fill="none" stroke="#371a6d" stroke-width="4.2" stroke-linejoin="bevel"/><rect x="1937" y="449" width="32" height="32" rx="6.5" fill="#333"/><polygon points="1952.8,451.9 1964.5,458.8 1964.7,470.4 1953.4,478.0 1941.1,471.8 1941.6,458.8" fill="#6aa552"/><polygon points="1952.8,451.9 1964.5,458.8 1964.7,470.4 1953.4,478.0 1941.6,458.8" fill="#74b257"/><polygon points="1958.0,454.9 1964.5,458.8 1964.7,470.4 1953.4,478.0 1959.0,465.0" fill="#5f9a4c" opacity="0.6"/><polygon points="1941.6,458.8 1941.1,471.8 1953.4,478.0" fill="#548a47"/><rect x="1937" y="516" width="32" height="32" rx="6.5" fill="#333"/><polygon points="1952.8,518.9 1964.5,525.8 1964.7,537.4 1953.4,545.0 1941.1,538.8 1941.6,525.8" fill="#6aa552"/><polygon points="1952.8,518.9 1964.5,525.8 1964.7,537.4 1953.4,545.0 1941.6,525.8" fill="#74b257"/><polygon points="1958.0,521.9 1964.5,525.8 1964.7,537.4 1953.4,545.0 1959.0,532.0" fill="#5f9a4c" opacity="0.6"/><polygon points="1941.6,525.8 1941.1,538.8 1953.4,545.0" fill="#548a47"/><rect x="143" y="1000.0" width="761" height="2" fill="#f4f4f7"/><rect x="143" y="1042.4" width="761" height="2" fill="#f4f4f7"/><rect x="143" y="1084.8" width="761" height="2" fill="#f4f4f7"/><rect x="143" y="1127.2" width="761" height="2" fill="#f4f4f7"/><rect x="143" y="1169.6" width="761" height="2" fill="#f4f4f7"/><rect x="143" y="1212.0" width="761" height="2" fill="#555c68"/><rect x="173.7" y="1213.0" width="2" height="10" fill="#555c68"/><rect x="273.6" y="1213.0" width="2" height="10" fill="#555c68"/><rect x="371.6" y="1213.0" width="2" height="10" fill="#555c68"/><rect x="472.0" y="1213.0" width="2" height="10" fill="#555c68"/><rect x="570.0" y="1213.0" width="2" height="10" fill="#555c68"/><rect x="669.5" y="1213.0" width="2" height="10" fill="#555c68"/><rect x="744.0" y="1213.0" width="2" height="10" fill="#555c68"/><rect x="843.6" y="1213.0" width="2" height="10" fill="#555c68"/><rect x="317.0" y="1178.3" width="17" height="34.7" fill="#371a6d"/><rect x="341.8" y="1084.5" width="17" height="128.5" fill="#7254f6"/><rect x="341.8" y="1017.0" width="17" height="67.5" fill="#371a6d"/><rect x="366.5" y="1127.2" width="17" height="85.8" fill="#7254f6"/><rect x="391.3" y="1178.3" width="17" height="34.7" fill="#7254f6"/><rect x="515.0" y="1169.3" width="17" height="43.7" fill="#371a6d"/><rect x="663.6" y="1186.8" width="17" height="26.2" fill="#7254f6"/><rect x="688.7" y="1186.8" width="17" height="26.2" fill="#7254f6"/><g transform="translate(105.0,1305.5) scale(1.0833)"><path d="M22.2819 9.8211a5.9847 5.9847 0 0 0-.5157-4.9108 6.0462 6.0462 0 0 0-6.5098-2.9A6.0651 6.0651 0 0 0 4.9807 4.1818a5.9847 5.9847 0 0 0-3.9977 2.9 6.0462 6.0462 0 0 0 .7427 7.0966 5.98 5.98 0 0 0 .511 4.9107 6.051 6.051 0 0 0 6.5146 2.9001A5.9847 5.9847 0 0 0 13.2599 24a6.0557 6.0557 0 0 0 5.7718-4.2058 5.9894 5.9894 0 0 0 3.9977-2.9001 6.0557 6.0557 0 0 0-.7475-7.0729zm-9.022 12.6081a4.4755 4.4755 0 0 1-2.8764-1.0408l.1419-.0804 4.7783-2.7582a.7948.7948 0 0 0 .3927-.6813v-6.7369l2.02 1.1686a.071.071 0 0 1 .038.052v5.5826a4.504 4.504 0 0 1-4.4945 4.4944zm-9.6607-4.1254a4.4708 4.4708 0 0 1-.5346-3.0137l.142.0852 4.783 2.7582a.7712.7712 0 0 0 .7806 0l5.8428-3.3685v2.3324a.0804.0804 0 0 1-.0332.0615L9.74 19.9502a4.4992 4.4992 0 0 1-6.1408-1.6464zM2.3408 7.8956a4.485 4.485 0 0 1 2.3655-1.9728V11.6a.7664.7664 0 0 0 .3879.6765l5.8144 3.3543-2.0201 1.1685a.0757.0757 0 0 1-.071 0l-4.8303-2.7865A4.504 4.504 0 0 1 2.3408 7.872zm16.5963 3.8558L13.1038 8.364 15.1192 7.2a.0757.0757 0 0 1 .071 0l4.8303 2.7913a4.4944 4.4944 0 0 1-.6765 8.1042v-5.6772a.79.79 0 0 0-.407-.667zm2.0107-3.0231l-.142-.0852-4.7735-2.7818a.7759.7759 0 0 0-.7854 0L9.409 9.2297V6.8974a.0662.0662 0 0 1 .0284-.0615l4.8303-2.7866a4.4992 4.4992 0 0 1 6.6802 4.66zM8.3065 12.863l-2.02-1.1638a.0804.0804 0 0 1-.038-.0567V6.0742a4.4992 4.4992 0 0 1 7.3757-3.4537l-.142.0805L8.704 5.459a.7948.7948 0 0 0-.3927.6813zm1.0976-2.3654l2.602-1.4998 2.6069 1.4998v2.9994l-2.5974 1.5-2.6067-1.5Z" fill="#111"/></g><g transform="translate(105.0,1372.5) scale(1.0833)"><path d="M22.2819 9.8211a5.9847 5.9847 0 0 0-.5157-4.9108 6.0462 6.0462 0 0 0-6.5098-2.9A6.0651 6.0651 0 0 0 4.9807 4.1818a5.9847 5.9847 0 0 0-3.9977 2.9 6.0462 6.0462 0 0 0 .7427 7.0966 5.98 5.98 0 0 0 .511 4.9107 6.051 6.051 0 0 0 6.5146 2.9001A5.9847 5.9847 0 0 0 13.2599 24a6.0557 6.0557 0 0 0 5.7718-4.2058 5.9894 5.9894 0 0 0 3.9977-2.9001 6.0557 6.0557 0 0 0-.7475-7.0729zm-9.022 12.6081a4.4755 4.4755 0 0 1-2.8764-1.0408l.1419-.0804 4.7783-2.7582a.7948.7948 0 0 0 .3927-.6813v-6.7369l2.02 1.1686a.071.071 0 0 1 .038.052v5.5826a4.504 4.504 0 0 1-4.4945 4.4944zm-9.6607-4.1254a4.4708 4.4708 0 0 1-.5346-3.0137l.142.0852 4.783 2.7582a.7712.7712 0 0 0 .7806 0l5.8428-3.3685v2.3324a.0804.0804 0 0 1-.0332.0615L9.74 19.9502a4.4992 4.4992 0 0 1-6.1408-1.6464zM2.3408 7.8956a4.485 4.485 0 0 1 2.3655-1.9728V11.6a.7664.7664 0 0 0 .3879.6765l5.8144 3.3543-2.0201 1.1685a.0757.0757 0 0 1-.071 0l-4.8303-2.7865A4.504 4.504 0 0 1 2.3408 7.872zm16.5963 3.8558L13.1038 8.364 15.1192 7.2a.0757.0757 0 0 1 .071 0l4.8303 2.7913a4.4944 4.4944 0 0 1-.6765 8.1042v-5.6772a.79.79 0 0 0-.407-.667zm2.0107-3.0231l-.142-.0852-4.7735-2.7818a.7759.7759 0 0 0-.7854 0L9.409 9.2297V6.8974a.0662.0662 0 0 1 .0284-.0615l4.8303-2.7866a4.4992 4.4992 0 0 1 6.6802 4.66zM8.3065 12.863l-2.02-1.1638a.0804.0804 0 0 1-.038-.0567V6.0742a4.4992 4.4992 0 0 1 7.3757-3.4537l-.142.0805L8.704 5.459a.7948.7948 0 0 0-.3927.6813zm1.0976-2.3654l2.602-1.4998 2.6069 1.4998v2.9994l-2.5974 1.5-2.6067-1.5Z" fill="#111"/></g><rect x="1080.4" y="1000.0" width="748.5999999999999" height="2" fill="#f4f4f7"/><rect x="1080.4" y="1042.4" width="748.5999999999999" height="2" fill="#f4f4f7"/><rect x="1080.4" y="1084.8" width="748.5999999999999" height="2" fill="#f4f4f7"/><rect x="1080.4" y="1127.2" width="748.5999999999999" height="2" fill="#f4f4f7"/><rect x="1080.4" y="1169.6" width="748.5999999999999" height="2" fill="#f4f4f7"/><rect x="1080.4" y="1212.0" width="748.5999999999999" height="2" fill="#555c68"/><rect x="1111.0" y="1213.0" width="2" height="10" fill="#555c68"/><rect x="1209.0" y="1213.0" width="2" height="10" fill="#555c68"/><rect x="1307.0" y="1213.0" width="2" height="10" fill="#555c68"/><rect x="1403.0" y="1213.0" width="2" height="10" fill="#555c68"/><rect x="1501.0" y="1213.0" width="2" height="10" fill="#555c68"/><rect x="1599.0" y="1213.0" width="2" height="10" fill="#555c68"/><rect x="1671.0" y="1213.0" width="2" height="10" fill="#555c68"/><rect x="1769.0" y="1213.0" width="2" height="10" fill="#555c68"/><rect x="1251.2" y="1202.6" width="16.8" height="10.4" fill="#371a6d"/><rect x="1276.0" y="1054.0" width="16.8" height="159.0" fill="#7254f6"/><rect x="1276.0" y="1005.8" width="16.8" height="48.2" fill="#371a6d"/><rect x="1300.2" y="1186.8" width="16.8" height="26.2" fill="#7254f6"/><rect x="1324.5" y="1174.0" width="16.8" height="39.0" fill="#7254f6"/><rect x="1446.3" y="1198.5" width="16.8" height="14.5" fill="#371a6d"/><rect x="1592.8" y="1192.0" width="16.8" height="21.0" fill="#7254f6"/><rect x="1617.0" y="1198.5" width="16.8" height="14.5" fill="#7254f6"/><g transform="translate(1030.0,1305.5) scale(1.0833)"><path d="M22.2819 9.8211a5.9847 5.9847 0 0 0-.5157-4.9108 6.0462 6.0462 0 0 0-6.5098-2.9A6.0651 6.0651 0 0 0 4.9807 4.1818a5.9847 5.9847 0 0 0-3.9977 2.9 6.0462 6.0462 0 0 0 .7427 7.0966 5.98 5.98 0 0 0 .511 4.9107 6.051 6.051 0 0 0 6.5146 2.9001A5.9847 5.9847 0 0 0 13.2599 24a6.0557 6.0557 0 0 0 5.7718-4.2058 5.9894 5.9894 0 0 0 3.9977-2.9001 6.0557 6.0557 0 0 0-.7475-7.0729zm-9.022 12.6081a4.4755 4.4755 0 0 1-2.8764-1.0408l.1419-.0804 4.7783-2.7582a.7948.7948 0 0 0 .3927-.6813v-6.7369l2.02 1.1686a.071.071 0 0 1 .038.052v5.5826a4.504 4.504 0 0 1-4.4945 4.4944zm-9.6607-4.1254a4.4708 4.4708 0 0 1-.5346-3.0137l.142.0852 4.783 2.7582a.7712.7712 0 0 0 .7806 0l5.8428-3.3685v2.3324a.0804.0804 0 0 1-.0332.0615L9.74 19.9502a4.4992 4.4992 0 0 1-6.1408-1.6464zM2.3408 7.8956a4.485 4.485 0 0 1 2.3655-1.9728V11.6a.7664.7664 0 0 0 .3879.6765l5.8144 3.3543-2.0201 1.1685a.0757.0757 0 0 1-.071 0l-4.8303-2.7865A4.504 4.504 0 0 1 2.3408 7.872zm16.5963 3.8558L13.1038 8.364 15.1192 7.2a.0757.0757 0 0 1 .071 0l4.8303 2.7913a4.4944 4.4944 0 0 1-.6765 8.1042v-5.6772a.79.79 0 0 0-.407-.667zm2.0107-3.0231l-.142-.0852-4.7735-2.7818a.7759.7759 0 0 0-.7854 0L9.409 9.2297V6.8974a.0662.0662 0 0 1 .0284-.0615l4.8303-2.7866a4.4992 4.4992 0 0 1 6.6802 4.66zM8.3065 12.863l-2.02-1.1638a.0804.0804 0 0 1-.038-.0567V6.0742a4.4992 4.4992 0 0 1 7.3757-3.4537l-.142.0805L8.704 5.459a.7948.7948 0 0 0-.3927.6813zm1.0976-2.3654l2.602-1.4998 2.6069 1.4998v2.9994l-2.5974 1.5-2.6067-1.5Z" fill="#111"/></g><g transform="translate(1030.0,1372.5) scale(1.0833)"><path d="M22.2819 9.8211a5.9847 5.9847 0 0 0-.5157-4.9108 6.0462 6.0462 0 0 0-6.5098-2.9A6.0651 6.0651 0 0 0 4.9807 4.1818a5.9847 5.9847 0 0 0-3.9977 2.9 6.0462 6.0462 0 0 0 .7427 7.0966 5.98 5.98 0 0 0 .511 4.9107 6.051 6.051 0 0 0 6.5146 2.9001A5.9847 5.9847 0 0 0 13.2599 24a6.0557 6.0557 0 0 0 5.7718-4.2058 5.9894 5.9894 0 0 0 3.9977-2.9001 6.0557 6.0557 0 0 0-.7475-7.0729zm-9.022 12.6081a4.4755 4.4755 0 0 1-2.8764-1.0408l.1419-.0804 4.7783-2.7582a.7948.7948 0 0 0 .3927-.6813v-6.7369l2.02 1.1686a.071.071 0 0 1 .038.052v5.5826a4.504 4.504 0 0 1-4.4945 4.4944zm-9.6607-4.1254a4.4708 4.4708 0 0 1-.5346-3.0137l.142.0852 4.783 2.7582a.7712.7712 0 0 0 .7806 0l5.8428-3.3685v2.3324a.0804.0804 0 0 1-.0332.0615L9.74 19.9502a4.4992 4.4992 0 0 1-6.1408-1.6464zM2.3408 7.8956a4.485 4.485 0 0 1 2.3655-1.9728V11.6a.7664.7664 0 0 0 .3879.6765l5.8144 3.3543-2.0201 1.1685a.0757.0757 0 0 1-.071 0l-4.8303-2.7865A4.504 4.504 0 0 1 2.3408 7.872zm16.5963 3.8558L13.1038 8.364 15.1192 7.2a.0757.0757 0 0 1 .071 0l4.8303 2.7913a4.4944 4.4944 0 0 1-.6765 8.1042v-5.6772a.79.79 0 0 0-.407-.667zm2.0107-3.0231l-.142-.0852-4.7735-2.7818a.7759.7759 0 0 0-.7854 0L9.409 9.2297V6.8974a.0662.0662 0 0 1 .0284-.0615l4.8303-2.7866a4.4992 4.4992 0 0 1 6.6802 4.66zM8.3065 12.863l-2.02-1.1638a.0804.0804 0 0 1-.038-.0567V6.0742a4.4992 4.4992 0 0 1 7.3757-3.4537l-.142.0805L8.704 5.459a.7948.7948 0 0 0-.3927.6813zm1.0976-2.3654l2.602-1.4998 2.6069 1.4998v2.9994l-2.5974 1.5-2.6067-1.5Z" fill="#111"/></g><rect x="1990" y="1000.0" width="765" height="2" fill="#f4f4f7"/><rect x="1990" y="1035.3" width="765" height="2" fill="#f4f4f7"/><rect x="1990" y="1070.7" width="765" height="2" fill="#f4f4f7"/><rect x="1990" y="1106.0" width="765" height="2" fill="#f4f4f7"/><rect x="1990" y="1141.3" width="765" height="2" fill="#f4f4f7"/><rect x="1990" y="1176.7" width="765" height="2" fill="#f4f4f7"/><rect x="1990" y="1212.0" width="765" height="2" fill="#555c68"/><rect x="2021.0" y="1213.0" width="2" height="10" fill="#555c68"/><rect x="2120.8" y="1213.0" width="2" height="10" fill="#555c68"/><rect x="2220.7" y="1213.0" width="2" height="10" fill="#555c68"/><rect x="2320.6" y="1213.0" width="2" height="10" fill="#555c68"/><rect x="2418.8" y="1213.0" width="2" height="10" fill="#555c68"/><rect x="2518.6" y="1213.0" width="2" height="10" fill="#555c68"/><rect x="2594.7" y="1213.0" width="2" height="10" fill="#555c68"/><rect x="2692.5" y="1213.0" width="2" height="10" fill="#555c68"/><rect x="2165.2" y="1188.8" width="17" height="24.2" fill="#7254f6"/><rect x="2189.8" y="1023.9" width="17" height="189.1" fill="#7254f6"/><rect x="2215.0" y="1141.6" width="17" height="71.4" fill="#371a6d"/><rect x="2240.0" y="1165.4" width="17" height="47.6" fill="#7254f6"/><rect x="2364.0" y="1188.8" width="17" height="24.2" fill="#7254f6"/><rect x="2513.7" y="1200.2" width="17" height="12.8" fill="#7254f6"/><rect x="2538.3" y="1200.2" width="17" height="12.8" fill="#7254f6"/><path d="M2758 1490 V1511 M2748.5 1502 L2758 1511.5 L2767.5 1502" fill="none" stroke="#555c68" stroke-width="2.2" stroke-linecap="round" stroke-linejoin="round"/></svg>
</body></html>
